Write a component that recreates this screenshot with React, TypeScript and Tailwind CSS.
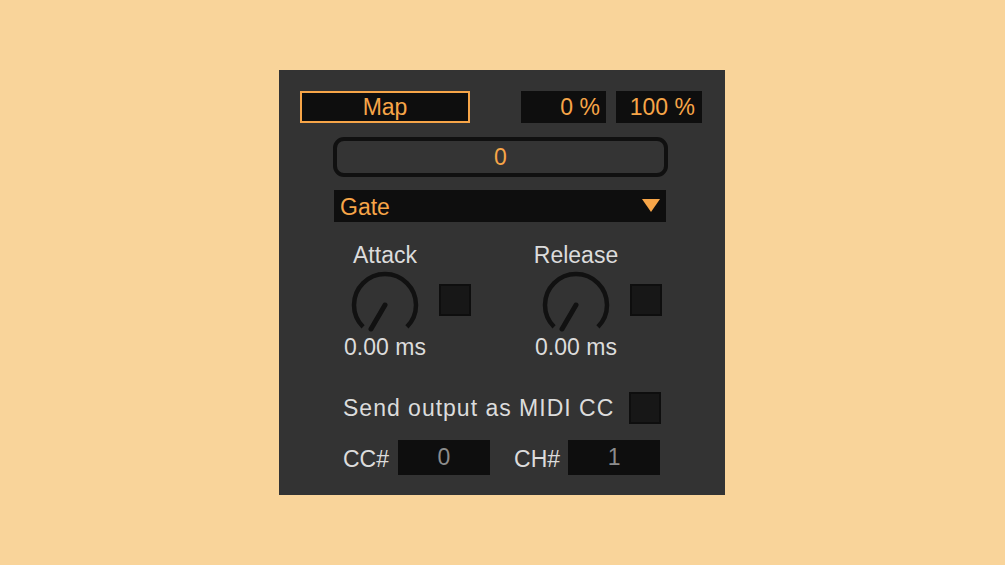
import React from "react";

const ORANGE = "text-[#f7a548]";

function Knob() {
  return (
    <svg width="70" height="64" viewBox="0 0 70 64" className="block">
      <path
        d="M 13.08 56.92 A 31 31 0 1 1 56.92 56.92"
        fill="none"
        stroke="#111111"
        strokeWidth="4.5"
      />
      <line x1="35" y1="35" x2="21" y2="59" stroke="#111111" strokeWidth="5" strokeLinecap="round" />
    </svg>
  );
}

function Toggle() {
  return <div className="w-[32px] h-[32px] border-2 border-[#0e0e0e] bg-[#171717] shrink-0" />;
}

function DialGroup({ label }: { label: string }) {
  return (
    <div className="flex items-start gap-[9px]">
      <div className="w-[90px] flex flex-col items-center">
        <div className="h-[26px] leading-[26px] text-[#dcdcdc]">{label}</div>
        <div className="mt-[2px]">
          <Knob />
        </div>
        <div className="h-[26px] leading-[26px] text-[#dcdcdc] whitespace-nowrap">0.00 ms</div>
      </div>
      <div className="mt-[42px]">
        <Toggle />
      </div>
    </div>
  );
}

export default function App() {
  return (
    <div
      className="w-full h-screen bg-[#f9d49a] flex items-center justify-center"
      style={{ fontFamily: '"Liberation Sans", Arial, sans-serif' }}
    >
      <div className="w-[446px] h-[425px] mr-px bg-[#333333] text-[23px] pt-[21px] flex flex-col">
        {/* map + range */}
        <div className="flex items-center pl-[21px]">
          <div className={`w-[170px] h-[32px] border-2 border-[#f7a548] bg-[#0e0e0e] ${ORANGE} flex items-center justify-center leading-none`}>
            Map
          </div>
          <div className={`ml-[51px] w-[85px] h-[32px] bg-[#0e0e0e] ${ORANGE} flex items-center justify-end pr-[6px] leading-none`}>
            0 %
          </div>
          <div className={`ml-[10px] w-[86px] h-[32px] bg-[#0e0e0e] ${ORANGE} flex items-center justify-end pr-[7px] leading-none`}>
            100 %
          </div>
        </div>

        {/* current value */}
        <div className={`ml-[54px] mt-[14px] w-[335px] h-[40px] rounded-[11px] border-4 border-[#101010] bg-[#343434] ${ORANGE} flex items-center justify-center leading-none`}>
          0
        </div>

        {/* mode */}
        <div className={`ml-[55px] mt-[13px] w-[332px] h-[32px] bg-[#0e0e0e] ${ORANGE} flex items-center justify-between pl-[6px] pr-[6px] pt-[2px] leading-none`}>
          <span>Gate</span>
          <svg width="18" height="14" viewBox="0 0 18 14" className="-mt-[2px]">
            <polygon points="0,0 18,0 9,13" fill="#f7a548" />
          </svg>
        </div>

        {/* envelope */}
        <div className="ml-[61px] mt-[20px] flex items-start gap-[60px]">
          <DialGroup label="Attack" />
          <DialGroup label="Release" />
        </div>

        {/* midi output */}
        <div className="ml-[64px] mt-[32px] h-[32px] flex items-center gap-[15px]">
          <span className="text-[#dcdcdc] tracking-[1px] whitespace-nowrap">Send output as MIDI CC</span>
          <Toggle />
        </div>

        <div className="ml-[64px] mt-[16px] h-[35px] flex items-center">
          <span className="text-[#dcdcdc] mt-[4px]">CC#</span>
          <div className="ml-[9px] w-[92px] h-[35px] bg-[#0e0e0e] text-[#8c8c8c] flex items-center justify-center leading-none">
            0
          </div>
          <span className="ml-[24px] text-[#dcdcdc] mt-[4px]">CH#</span>
          <div className="ml-[8px] w-[92px] h-[35px] bg-[#0e0e0e] text-[#8c8c8c] flex items-center justify-center leading-none">
            1
          </div>
        </div>
      </div>
    </div>
  );
}
